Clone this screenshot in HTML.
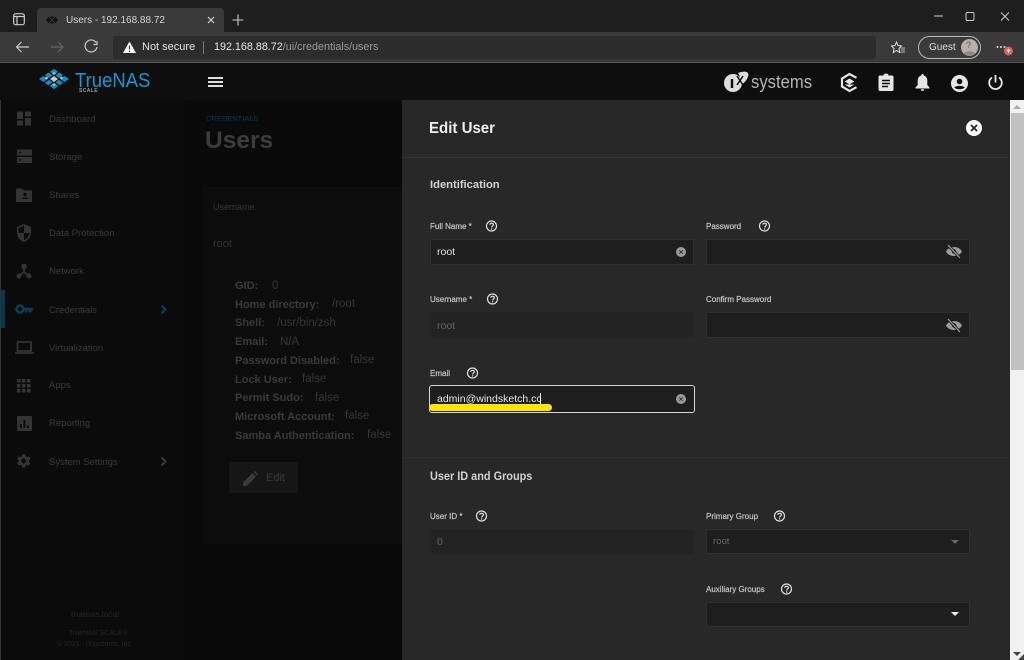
<!DOCTYPE html>
<html lang="en"><head><meta charset="utf-8"><title>Users - 192.168.88.72</title>
<style>
html,body{margin:0;padding:0;background:#0a0a0a}
#r{position:relative;width:1024px;height:660px;overflow:hidden;background:#0a0a0a;font-family:"Liberation Sans",sans-serif}
.a,.t{position:absolute}
.t{white-space:nowrap;line-height:1}
svg{position:absolute;overflow:visible}
.nav{font-size:9.5px;color:#3a3a3a;left:49px}
.b{font-size:11px;font-weight:bold;color:#3a3a3a;left:235px}
.v{font-size:11.5px;color:#363636}
.l{font-size:8px;color:#c4c4c4;-webkit-text-stroke:.2px #c4c4c4}
.i{position:absolute;background:#1e1e1e;border:1px solid #2f2f2f;box-sizing:border-box}
.d{background:#232323;border-color:#262626}
.h{fill:none;stroke:#ddd;stroke-width:1.2}
</style></head><body><div id="r">

<!-- browser chrome -->
<div class="a" style="left:0;top:0;width:1024px;height:32px;background:#1e1e1e"></div>
<div class="a" style="left:37px;top:8px;width:187px;height:24px;background:#3a3a3a;border-radius:4px 4px 0 0"></div>
<div class="a" style="left:0;top:32px;width:1024px;height:30px;background:#3a3a3a"></div>
<div class="a" style="left:113px;top:36px;width:763px;height:23px;background:#2c2c2c;border-radius:3px"></div>
<div class="a" style="left:0;top:62px;width:1024px;height:1px;background:#555"></div>
<svg style="left:13px;top:13px" width="12" height="13"><rect x=".7" y=".7" width="10.6" height="11" rx="2" fill="none" stroke="#ccc" stroke-width="1.2"/><path d="M1 3.5H11M4 3.5V11.5" stroke="#ccc" stroke-width="1.2"/></svg>
<svg style="left:46px;top:15px" width="12" height="10"><path d="M0 5L3 1.5H9L12 5L9 8.5H3Z" fill="#111"/><path d="M3 1.5L9 8.5M9 1.5L3 8.5" stroke="#444" stroke-width=".7"/></svg>
<div class="t" style="left:66px;top:15px;font-size:10px;color:#d4d4d4;margin-top:.5px">Users - 192.168.88.72</div>
<svg style="left:207px;top:16px" width="8" height="8"><path d="M1 1L7 7M7 1L1 7" stroke="#ddd" stroke-width="1"/></svg>
<svg style="left:232px;top:14px" width="12" height="12"><path d="M6 .5V11.500M.5 6H11.500" stroke="#ccc" stroke-width="1.100"/></svg>
<svg style="left:934px;top:12px" width="80" height="12"><path d="M0 4H9" stroke="#ccc"/><rect x="32" y=".5" width="8" height="8" rx="1.500" fill="none" stroke="#ccc"/><path d="M67 .5L75 8.500M75 .5L67 8.500" stroke="#ccc"/></svg>
<svg style="left:15px;top:40px" width="90" height="15"><path d="M14 7H1.500M6.500 2L1.500 7L6.500 12" fill="none" stroke="#ccc" stroke-width="1.200"/><path d="M36 7H48M43 2L48 7L43 12" fill="none" stroke="#666" stroke-width="1.200"/><path d="M81 2.500A6 6 0 1 0 82 7" fill="none" stroke="#ccc" stroke-width="1.200"/><path d="M82 1V4.500H78.500" fill="none" stroke="#ccc" stroke-width="1.200"/></svg>
<svg style="left:123px;top:41px" width="13" height="12"><path d="M6.500 .5L13 12H0Z" fill="#fff"/><path d="M6.500 4.500V8.500M6.500 9.500V11" stroke="#333" stroke-width="1.200"/></svg>
<div class="t" style="left:142px;top:42px;font-size:11px;color:#e2e2e2">Not secure</div>
<div class="a" style="left:203px;top:41px;width:1px;height:13px;background:#777"></div>
<div class="t" style="left:214px;top:42px;font-size:10.75px;color:#e8e8e8">192.168.88.72<span style="color:#9a9a9a">/ui/credentials/users</span></div>
<svg style="left:891px;top:41px" width="14" height="13"><path d="M5.500 1L7 4.500L10.500 5L8 7.500L8.700 11.500L5.500 9.500L2.300 11.500L3 7.500L.5 5L4 4.500Z" fill="none" stroke="#ddd"/><path d="M9.500 7H14M10 9H14M9.500 11H14" stroke="#ddd" stroke-width=".8"/></svg>
<div class="a" style="left:918px;top:36px;width:63px;height:23px;box-sizing:border-box;border:1px solid #bbb;border-radius:12px"></div>
<div class="t" style="left:929px;top:43px;font-size:10px;color:#ddd">Guest</div>
<svg style="left:961px;top:39px" width="17" height="17"><circle cx="8.500" cy="8.500" r="8.500" fill="#b5b0ab"/><path d="M3 14.500C4.500 11.500 12.500 11.500 14 14.500C11 17.500 6 17.500 3 14.500Z" fill="#8e8a86"/></svg>
<div class="t" style="left:966px;top:41px;font-size:9px;font-weight:bold;color:#777">?</div>
<svg style="left:996px;top:45px" width="18" height="12"><circle cx="1.500" cy="2" r="1" fill="#ddd"/><circle cx="5" cy="2" r="1" fill="#ddd"/><circle cx="8.500" cy="2" r="1" fill="#ddd"/><circle cx="12.500" cy="6" r="4.500" fill="#e35f5f"/><path d="M12.500 8V4.500M11 6L12.500 4.500L14 6" fill="none" stroke="#fff"/></svg>

<!-- app header -->
<div class="a" style="left:0;top:63px;width:1024px;height:37px;background:#0e0e0e"></div>
<svg style="left:38px;top:69px" width="32" height="22"><path d="M16 0L31 10L16 20L1 10Z" fill="#0b90c9"/><path d="M6 6.500L21 16.500M11 3L26 13.500M26 6.500L11 16.500M21 3L6 13.500" stroke="#0e0e0e" stroke-width="1.500"/><path d="M16 7L20 10L16 13L12 10Z" fill="#c8c8c8"/><path d="M8.500 7.500L10.500 9L8.500 10.500L6.500 9ZM23.500 7.500L25.500 9L23.500 10.500L21.500 9ZM16 14L18 15.500L16 17L14 15.500ZM16 3L18 4.500L16 6L14 4.500Z" fill="#bbb"/></svg>
<div class="t" style="left:75px;top:71px;font-size:20px;color:#0f9ad6;transform:scaleX(.925);transform-origin:0 0">TrueNAS</div>
<div class="t" style="left:79px;top:89px;font-size:5px;font-weight:bold;color:#999;letter-spacing:.4px">SCALE</div>
<div class="a" style="left:208px;top:77px;width:15px;height:2px;background:#ddd;box-shadow:0 4px 0 #ddd,0 8px 0 #ddd"></div>
<svg style="left:723px;top:71px" width="28" height="22"><circle cx="10" cy="12" r="9" fill="#ddd"/><path d="M15 2C23 -1 28 1 24 8C21 13 17 15 13 15C18 10 18 6 15 2Z" fill="#ddd"/><path d="M9 8V17" stroke="#0e0e0e" stroke-width="2.400"/><path d="M14 5L20 14M20 5L14 14" stroke="#0e0e0e" stroke-width="1.500"/></svg>
<div class="t" style="left:751px;top:73px;font-size:18px;color:#b4b4b4;transform:scaleX(.925);transform-origin:0 0">systems</div>
<svg style="left:841px;top:73px" width="17" height="19"><path d="M15.500 4.800L8.500 1L1 5.500V13.500L8.500 18L15.500 14.200" fill="none" stroke="#e6e6e6" stroke-width="2.200"/><path d="M4.500 8.500L8.500 6L12.500 8.500L8.500 11ZM4.500 11.500L8.500 14L12.500 11.500" fill="#e6e6e6" stroke="#e6e6e6" stroke-width=".8"/></svg>
<svg style="left:878px;top:73px" width="16" height="18"><path d="M2 2.500H5.500A2.500 2 0 0 1 10.500 2.500H14A1.500 1.500 0 0 1 15.500 4V16.500A1.500 1.500 0 0 1 14 18H2A1.500 1.500 0 0 1 .5 16.500V4A1.500 1.500 0 0 1 2 2.500Z" fill="#e6e6e6"/><path d="M4 7.500H12M4 10.500H12M4 13.500H10" stroke="#0e0e0e" stroke-width="1.400"/></svg>
<svg style="left:915px;top:74px" width="15" height="17"><path d="M7.500 0A1.300 1.300 0 0 1 8.800 1.500C11 2.300 12.300 4 12.300 7V11L14.500 13.500V14.500H.5V13.500L2.700 11V7C2.700 4 4 2.300 6.200 1.500A1.300 1.300 0 0 1 7.500 0ZM5.800 15.200H9.200A1.700 1.700 0 0 1 5.800 15.200Z" fill="#e6e6e6"/></svg>
<svg style="left:951px;top:75px" width="17" height="17"><circle cx="8.500" cy="8.500" r="8.500" fill="#e6e6e6"/><circle cx="8.500" cy="6.500" r="2.800" fill="#0e0e0e"/><path d="M3.300 12.500C5 10.300 12 10.300 13.700 12.500C12 14.800 5 14.800 3.300 12.500Z" fill="#0e0e0e"/></svg>
<svg style="left:988px;top:74px" width="15" height="17"><path d="M7.500 1V8.500" stroke="#e6e6e6" stroke-width="1.800"/><path d="M4 3.500A6.300 6.300 0 1 0 11 3.500" fill="none" stroke="#e6e6e6" stroke-width="1.800"/></svg>

<!-- sidebar, dimmed -->
<div class="a" style="left:0;top:100px;width:186px;height:560px;background:#0b0b0b"></div>
<div class="a" style="left:0;top:100px;width:1px;height:560px;background:#333"></div>
<div class="a" style="left:1px;top:290px;width:4px;height:38px;background:#04384f"></div>
<svg style="left:15px;top:110px" width="18" height="17"><path d="M2 1.500H8V9H2ZM2 10.500H8V15.500H2ZM10 1.500H16V6.500H10ZM10 8H16V15.500H10Z" fill="#343434"/></svg>
<svg style="left:16px;top:149px" width="16" height="15"><path d="M1 .5H16V6.500H1ZM1 8H16V14H1Z" fill="#343434"/><circle cx="4" cy="3.500" r="1" fill="#0b0b0b"/><circle cx="4" cy="11" r="1" fill="#0b0b0b"/></svg>
<svg style="left:16px;top:188px" width="17" height="14"><path d="M0 1.500A1 1 0 0 1 1 .5H6L8 2.500H15A1 1 0 0 1 16 3.500V13A1 1 0 0 1 15 14H1A1 1 0 0 1 0 13Z" fill="#343434"/><circle cx="9" cy="6.500" r="1.700" fill="#0b0b0b"/><path d="M5.500 11C6 9 12 9 12.500 11Z" fill="#0b0b0b"/></svg>
<svg style="left:17px;top:224px" width="14" height="18"><path d="M7 0L14 3V8.500C14 13 11 16.500 7 18C3 16.500 0 13 0 8.500V3Z" fill="#343434"/><path d="M7 2V9H1.500V4ZM7 9H12.500C12 12.500 10 15 7 16Z" fill="#0b0b0b"/></svg>
<svg style="left:16px;top:263px" width="16" height="16"><circle cx="8" cy="3.500" r="2.800" fill="#343434"/><circle cx="3" cy="13" r="2.500" fill="#343434"/><circle cx="13" cy="13" r="2.500" fill="#343434"/><path d="M8 5V9L3 13M8 9L13 13" stroke="#343434" stroke-width="1.800" fill="none"/></svg>
<svg style="left:15px;top:304px" width="18" height="10"><circle cx="5" cy="5" r="3.600" fill="none" stroke="#06425c" stroke-width="2.400"/><path d="M8 3.800H18V6.200H16.500V8.500H14V6.200H12.500V8.500H10V6.200H8Z" fill="#06425c"/></svg>
<svg style="left:160px;top:304px" width="8" height="11"><path d="M1.500 1.500L5.500 5.500L1.500 9.500" fill="none" stroke="#06425c" stroke-width="2"/></svg>
<svg style="left:15px;top:341px" width="19" height="13"><path d="M2.500 1H16V10H2.500Z" fill="none" stroke="#343434" stroke-width="1.700"/><path d="M0 12H19" stroke="#343434" stroke-width="1.800"/></svg>
<svg style="left:17px;top:379px" width="14" height="13"><g fill="#343434"><rect x="0" y="0" width="3.500" height="3.500"/><rect x="5" y="0" width="3.500" height="3.500"/><rect x="10" y="0" width="3.500" height="3.500"/><rect x="0" y="5" width="3.500" height="3.500"/><rect x="5" y="5" width="3.500" height="3.500"/><rect x="10" y="5" width="3.500" height="3.500"/><rect x="0" y="10" width="3.500" height="3.500"/><rect x="5" y="10" width="3.500" height="3.500"/><rect x="10" y="10" width="3.500" height="3.500"/></g></svg>
<svg style="left:17px;top:416px" width="15" height="15"><rect width="15" height="15" rx="1.500" fill="#343434"/><path d="M3 8H4.800V12H3ZM6.500 4H8.300V12H6.500ZM10 9.500H11.800V12H10Z" fill="#0b0b0b"/></svg>
<svg style="left:16px;top:453px" width="16" height="16" viewBox="0 0 24 24"><path d="M19.400 13c.1-.3.100-.7.100-1s0-.7-.1-1l2.100-1.600c.2-.1.200-.4.100-.6l-2-3.500c-.1-.2-.4-.3-.6-.2l-2.500 1c-.5-.4-1.100-.7-1.700-1L14 2.400c0-.2-.2-.4-.5-.4h-4c-.2 0-.4.200-.5.400l-.4 2.700c-.6.200-1.200.6-1.700 1l-2.500-1c-.2-.1-.5 0-.6.200l-2 3.500c-.1.200-.1.500.1.600L4 11c-.1.300-.1.700-.1 1s0 .7.100 1l-2.100 1.600c-.2.100-.2.400-.1.600l2 3.500c.1.200.4.300.6.200l2.500-1c.5.400 1.100.7 1.700 1l.4 2.700c0 .2.200.4.500.4h4c.2 0 .4-.2.500-.4l.4-2.700c.6-.2 1.200-.6 1.700-1l2.500 1c.2.100.5 0 .6-.2l2-3.500c.1-.2.100-.5-.1-.6ZM11.500 15.500a3.500 3.500 0 1 1 0-7 3.500 3.500 0 0 1 0 7Z" fill="#343434"/></svg>
<svg style="left:160px;top:456px" width="8" height="11"><path d="M1.500 1.500L5.500 5.500L1.500 9.500" fill="none" stroke="#3a3a3a" stroke-width="2"/></svg>
<div class="t nav" style="top:115px">Dashboard</div>
<div class="t nav" style="top:153px">Storage</div>
<div class="t nav" style="top:191px">Shares</div>
<div class="t nav" style="top:229px">Data Protection</div>
<div class="t nav" style="top:267px">Network</div>
<div class="t nav" style="top:306px">Credentials</div>
<div class="t nav" style="top:344px">Virtualization</div>
<div class="t nav" style="top:381px">Apps</div>
<div class="t nav" style="top:419px">Reporting</div>
<div class="t nav" style="top:458px">System Settings</div>
<div class="t" style="left:71px;top:610px;font-size:8.500px;color:#272727">truenas.local</div>
<div class="t" style="left:69px;top:630px;font-size:7px;color:#272727">TrueNAS SCALE®</div>
<div class="t" style="left:57px;top:641px;font-size:7px;color:#272727">© 2021 - iXsystems, Inc.</div>

<!-- dimmed page content -->
<div class="t" style="left:206px;top:115px;font-size:7.500px;color:#04384f">CREDENTIALS</div>
<div class="t" style="left:205px;top:129px;font-size:24.5px;font-weight:bold;color:#3c3c3c">Users</div>
<div class="a" style="left:203px;top:187px;width:199px;height:357px;background:#0c0c0c;border:1px solid #0f0f0f;box-sizing:border-box"></div>
<div class="a" style="left:203px;top:225px;width:199px;height:1px;background:#101010"></div>
<div class="t" style="left:213px;top:203px;font-size:9px;color:#383838">Username</div>
<div class="t" style="left:213px;top:239px;font-size:11px;color:#363636">root</div>
<div class="t b" style="top:281px">GID:</div><div class="t v" style="left:272px;top:281px">0</div>
<div class="t b" style="top:300px">Home directory:</div><div class="t v" style="left:332px;top:299px">/root</div>
<div class="t b" style="top:318px">Shell:</div><div class="t v" style="left:277px;top:318px">/usr/bin/zsh</div>
<div class="t b" style="top:337px">Email:</div><div class="t v" style="left:280px;top:337px">N/A</div>
<div class="t b" style="top:356px">Password Disabled:</div><div class="t v" style="left:350px;top:355px">false</div>
<div class="t b" style="top:375px">Lock User:</div><div class="t v" style="left:302px;top:374px">false</div>
<div class="t b" style="top:393px">Permit Sudo:</div><div class="t v" style="left:315px;top:393px">false</div>
<div class="t b" style="top:412px">Microsoft Account:</div><div class="t v" style="left:345px;top:411px">false</div>
<div class="t b" style="top:431px">Samba Authentication:</div><div class="t v" style="left:367px;top:430px">false</div>
<div class="a" style="left:229px;top:462px;width:69px;height:31px;background:#161616"></div>
<svg style="left:243px;top:471px" width="15" height="15"><path d="M0 15V11.500L9.500 2L13 5.500L3.500 15ZM10.500 1L12 0L15 3L14 4.500Z" fill="#3a3a3a"/></svg>
<div class="t" style="left:266px;top:473px;font-size:11px;color:#3a3a3a">Edit</div>

<!-- slide-in panel -->
<div class="a" style="left:402px;top:100px;width:608px;height:560px;background:#282828"></div>
<div class="a" style="left:402px;top:157px;width:606px;height:1px;background:#333"></div>
<div class="a" style="left:402px;top:457px;width:606px;height:1px;background:#2e2e2e"></div>
<div class="t" style="left:429px;top:121px;font-size:16px;font-weight:bold;color:#f0f0f0;transform:scaleX(.94);transform-origin:0 0">Edit User</div>
<svg style="left:966px;top:120px" width="16" height="16"><circle cx="8" cy="8" r="8" fill="#fff"/><path d="M5 5L11 11M11 5L5 11" stroke="#282828" stroke-width="1.800"/></svg>
<div class="t" style="left:430px;top:180px;font-size:11.2px;font-weight:bold;color:#d2d2d2">Identification</div>
<div class="t" style="left:430px;top:471px;font-size:11.6px;font-weight:bold;color:#d2d2d2;transform:scaleX(.94);transform-origin:0 0">User ID and Groups</div>

<div class="t l" style="left:430px;top:223px">Full Name *</div>
<div class="t l" style="left:706px;top:223px">Password</div>
<div class="t l" style="left:430px;top:296px">Username *</div>
<div class="t l" style="left:706px;top:296px">Confirm Password</div>
<div class="t l" style="left:430px;top:370px">Email</div>
<div class="t l" style="left:430px;top:513px">User ID *</div>
<div class="t l" style="left:706px;top:513px">Primary Group</div>
<div class="t l" style="left:706px;top:586px">Auxiliary Groups</div>

<svg style="left:486px;top:220px" width="12" height="12"><circle class="h" cx="5.500" cy="6" r="5"/><path class="h" d="M3.800 4.800C3.800 2.800 7.400 2.800 7.400 4.800C7.400 6 5.600 6 5.600 7.500M5.600 8.300V9.500"/></svg>
<svg style="left:759px;top:220px" width="12" height="12"><circle class="h" cx="5.500" cy="6" r="5"/><path class="h" d="M3.800 4.800C3.800 2.800 7.400 2.800 7.400 4.800C7.400 6 5.600 6 5.600 7.500M5.600 8.300V9.500"/></svg>
<svg style="left:487px;top:293px" width="12" height="12"><circle class="h" cx="5.500" cy="6" r="5"/><path class="h" d="M3.800 4.800C3.800 2.800 7.400 2.800 7.400 4.800C7.400 6 5.600 6 5.600 7.500M5.600 8.300V9.500"/></svg>
<svg style="left:467px;top:367px" width="12" height="12"><circle class="h" cx="5.500" cy="6" r="5"/><path class="h" d="M3.800 4.800C3.800 2.800 7.400 2.800 7.400 4.800C7.400 6 5.600 6 5.600 7.500M5.600 8.300V9.500"/></svg>
<svg style="left:476px;top:510px" width="12" height="12"><circle class="h" cx="5.500" cy="6" r="5"/><path class="h" d="M3.800 4.800C3.800 2.800 7.400 2.800 7.400 4.800C7.400 6 5.600 6 5.600 7.500M5.600 8.300V9.500"/></svg>
<svg style="left:774px;top:510px" width="12" height="12"><circle class="h" cx="5.500" cy="6" r="5"/><path class="h" d="M3.800 4.800C3.800 2.800 7.400 2.800 7.400 4.800C7.400 6 5.600 6 5.600 7.500M5.600 8.300V9.500"/></svg>
<svg style="left:781px;top:583px" width="12" height="12"><circle class="h" cx="5.500" cy="6" r="5"/><path class="h" d="M3.800 4.800C3.800 2.800 7.400 2.800 7.400 4.800C7.400 6 5.600 6 5.600 7.500M5.600 8.300V9.500"/></svg>

<div class="i" style="left:430px;top:239px;width:264px;height:26px"></div>
<div class="i" style="left:706px;top:239px;width:264px;height:26px"></div>
<div class="i d" style="left:430px;top:312px;width:264px;height:26px"></div>
<div class="i" style="left:706px;top:312px;width:264px;height:26px"></div>
<div class="i" style="left:429px;top:385px;width:266px;height:28px;border-color:#d6d6d6;border-radius:3px"></div>
<div class="i d" style="left:430px;top:529px;width:264px;height:26px"></div>
<div class="i" style="left:706px;top:529px;width:264px;height:25px"></div>
<div class="i" style="left:706px;top:602px;width:264px;height:25px"></div>

<div class="t" style="left:437px;top:247px;font-size:10.500px;color:#e2e2e2">root</div>
<div class="t" style="left:437px;top:321px;font-size:10.500px;color:#666">root</div>
<div class="t" style="left:437px;top:394px;font-size:10.500px;color:#e8e8e8">admin@windsketch.cc</div>
<div class="a" style="left:540px;top:393px;width:1px;height:12px;background:#eee"></div>
<div class="a" style="left:429px;top:404px;width:123px;height:7px;background:#ffe600;border-radius:4px"></div>
<div class="t" style="left:437px;top:537px;font-size:10.500px;color:#666">0</div>
<div class="t" style="left:713px;top:537px;font-size:9.500px;color:#666">root</div>

<svg style="left:676px;top:247px" width="10" height="10"><circle cx="5" cy="5" r="5" fill="#999"/><path d="M3.300 3.300L6.700 6.700M6.700 3.300L3.300 6.700" stroke="#333" stroke-width="1"/></svg>
<svg style="left:676px;top:394px" width="10" height="10"><circle cx="5" cy="5" r="5" fill="#999"/><path d="M3.300 3.300L6.700 6.700M6.700 3.300L3.300 6.700" stroke="#333" stroke-width="1"/></svg>
<svg style="left:946px;top:244px" width="16" height="15"><path d="M0 7.500C3 1.500 13 1.500 16 7.500C13 13.500 3 13.500 0 7.500Z" fill="#9c9c9c"/><circle cx="8" cy="7.500" r="2.200" fill="#1e1e1e"/><path d="M2 1L14 14" stroke="#1e1e1e" stroke-width="2.800"/><path d="M2 1L14 14" stroke="#9c9c9c" stroke-width="1.200"/></svg>
<svg style="left:946px;top:318px" width="16" height="15"><path d="M0 7.500C3 1.500 13 1.500 16 7.500C13 13.500 3 13.500 0 7.500Z" fill="#9c9c9c"/><circle cx="8" cy="7.500" r="2.200" fill="#1e1e1e"/><path d="M2 1L14 14" stroke="#1e1e1e" stroke-width="2.800"/><path d="M2 1L14 14" stroke="#9c9c9c" stroke-width="1.200"/></svg>
<svg style="left:951px;top:540px" width="9" height="5"><path d="M0 0H8L4 4Z" fill="#666"/></svg>
<svg style="left:951px;top:612px" width="9" height="5"><path d="M0 0H8L4 4Z" fill="#eee"/></svg>

<!-- scrollbar -->
<div class="a" style="left:1010px;top:100px;width:14px;height:560px;background:#f1f1f1"></div>
<div class="a" style="left:1011px;top:113px;width:13px;height:257px;background:#c1c1c1"></div>
<svg style="left:1013px;top:105px" width="8" height="5"><path d="M0 4H8L4 0Z" fill="#aaa"/></svg>
<svg style="left:1013px;top:652px" width="8" height="5"><path d="M0 0H8L4 4Z" fill="#444"/></svg>
<svg style="left:1018px;top:654px" width="6" height="6"><path d="M6 0V6H0Z" fill="#444"/></svg>

</div></body></html>
